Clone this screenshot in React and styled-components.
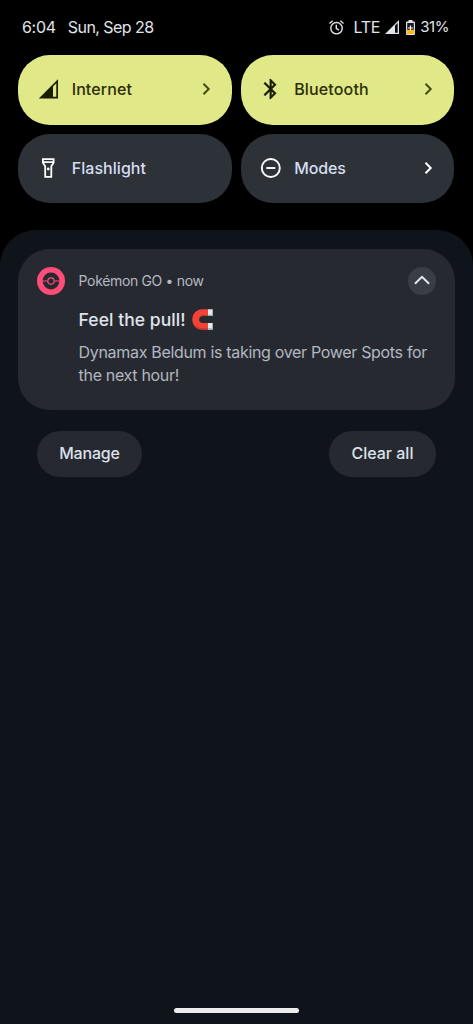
import styled, { createGlobalStyle } from "styled-components";

const GlobalStyle = createGlobalStyle`
    * {
        box-sizing: border-box;
    }

    body {
        margin: 0;
        background-color: #000;
        font-family: "Inter", "Roboto", sans-serif;
    }

    button {
        font: inherit;
        border: none;
        padding: 0;
        cursor: pointer;
    }

    svg {
        display: block;
        flex: none;
    }
`;

const Screen = styled.div`
    height: 1024px;
    display: flex;
    flex-direction: column;
    background-color: #000;
    overflow: hidden;
`;

const StatusBar = styled.header`
    height: 55px;
    flex: none;
    display: flex;
    align-items: center;
    justify-content: space-between;
    padding: 0 24px 1px 22px;
    color: #e1e4ea;
`;

const StatusGroup = styled.div`
    display: flex;
    align-items: center;
    gap: ${({ $gap }) => $gap};
`;

const StatusText = styled.span`
    margin: ${({ $margin }) => $margin || "0"};
    font-size: ${({ $size }) => $size || "16px"};
    line-height: 20px;
    letter-spacing: ${({ $spacing }) => $spacing || "0"};
    white-space: nowrap;
`;

const Tiles = styled.section`
    flex: none;
    display: grid;
    grid-template-columns: 213.5px 213.5px;
    grid-auto-rows: 69.5px;
    gap: 9px;
    padding: 0 18.2px;
`;

const Tile = styled.button`
    display: flex;
    align-items: center;
    padding: 0 16px 1px 18.5px;
    border-radius: 32px;
    background-color: ${({ $active }) => ($active ? "#e1e888" : "#2d3138")};
    color: ${({ $active }) => ($active ? "#1b1d00" : "#ffffff")};

    .chevron {
        margin-left: auto;
        color: ${({ $active }) => ($active ? "#474a10" : "#ffffff")};
    }
`;

const TileLabel = styled.span`
    margin-left: 11px;
    font-size: 16px;
    font-weight: 500;
    line-height: 24px;
    letter-spacing: ${({ $spacing }) => $spacing || "0"};
    color: ${({ $active }) => ($active ? "#2b2e06" : "#d5def0")};
`;

const Shade = styled.main`
    flex: 1;
    margin-top: 27px;
    padding: 18.5px 18.4px 0 18.2px;
    border-radius: 36px 36px 0 0;
    background-color: #0f141a;
    display: flex;
    flex-direction: column;
`;

const Notification = styled.article`
    height: 161.5px;
    flex: none;
    display: grid;
    grid-template-columns: 28px 1fr 28px;
    column-gap: 14px;
    padding: 18px 18.3px 0 18.4px;
    align-content: start;
    border-radius: 32px;
    background-color: #262a30;
`;

const AppLine = styled.div`
    align-self: center;
    font-size: 14px;
    line-height: 20px;
    letter-spacing: ${({ $spacing }) => $spacing || "0"};
    color: #b5b9c4;
    white-space: nowrap;
`;

const Collapse = styled.button`
    width: 28px;
    height: 28px;
    display: flex;
    align-items: center;
    justify-content: center;
    border-radius: 50%;
    background-color: #393d45;
    color: #e4e7ed;
`;

const Message = styled.div`
    grid-column: 2 / 4;
`;

const Title = styled.h2`
    margin: 12px 0 0;
    display: flex;
    align-items: center;
    gap: 6px;
    font-size: 17.5px;
    font-weight: 500;
    line-height: 26px;
    letter-spacing: ${({ $spacing }) => $spacing || "0"};
    color: #e0e3ec;
`;

const Body = styled.p`
    margin: 8px 0 0;
    font-size: 16px;
    line-height: 23px;
    letter-spacing: ${({ $spacing }) => $spacing || "0"};
    color: #b2b7c2;
    white-space: nowrap;
`;

const Actions = styled.div`
    flex: none;
    display: flex;
    justify-content: space-between;
    padding: 20.5px 18.7px 0 18.5px;
`;

const Action = styled.button`
    width: ${({ $width }) => $width};
    height: 46.5px;
    padding-bottom: 1px;
    border-radius: 24px;
    background-color: #262a30;
    color: #dce1eb;
    font-size: 16px;
    font-weight: 500;
    letter-spacing: ${({ $spacing }) => $spacing || "0"};
`;

const HomeBar = styled.div`
    width: 125px;
    height: 5px;
    margin: auto auto 11px;
    border-radius: 3px;
    background-color: #ebecee;
`;

const AlarmIcon = () => (
	<svg width="15" height="15" viewBox="0 0 15 15" fill="none" stroke="currentColor" strokeWidth="1.4">
		<circle cx="7.5" cy="8.2" r="5.7" />
		<path d="M7.3 4.8v3.6l2.6 1.7M.5 3.5 3.7.8M14.5 3.5 11.3.8" />
	</svg>
);

const StatusSignalIcon = () => (
	<svg width="14" height="14" viewBox="0 0 14 14">
		<path d="M0 14 14 0v14z" fill="currentColor" />
		<path d="M10 5.600 12.700 2.900v9.900H10z" fill="#0b0d0f" />
	</svg>
);

const BatteryIcon = () => (
	<svg width="9" height="15" viewBox="0 0 9 15">
		<path d="M2.500 0h4v1.400H8a1 1 0 0 1 1 1V14a1 1 0 0 1-1 1H1a1 1 0 0 1-1-1V2.400a1 1 0 0 1 1-1h1.500z" fill="currentColor" />
		<path d="M1.200 3h6.600v7H1.200z" fill="#16191d" />
		<path d="M.4 9.800h8.200V14H.4z" fill="#fbb91b" />
		<path d="M3.900 5.500h1.200v1.900H7v1.200H5.100v1.900H3.900V8.600H2V7.400h1.900z" fill="#fff" />
	</svg>
);

const SignalIcon = () => (
	<svg width="24" height="24" viewBox="0 0 24 24">
		<path d="M1.800 21.500 21 2.300v19.200z" fill="currentColor" />
		<path d="M16 9.500 19.300 6.200v13.600H16z" fill="#e1e888" />
	</svg>
);

const BluetoothIcon = () => (
	<svg width="24" height="24" viewBox="0.300 0 24 24" fill="currentColor">
		<path
			d="M17.7 7.700 12 2h-1v7.600L6.400 5 5 6.400l5.600 5.600L5 17.600 6.400 19l4.600-4.600V22h1l5.700-5.700-4.300-4.300 4.300-4.300zM13 5.800l1.900 1.900L13 9.600V5.800zm1.900 10.500L13 18.200v-3.800l1.900 1.900z"
			stroke="currentColor"
			strokeWidth="0.200"
		/>
	</svg>
);

const FlashlightIcon = () => (
	<svg width="24" height="24" viewBox="0 0 24 24" fill="none" stroke="currentColor" strokeWidth="1.800">
		<path d="M5.900 3.100h10.700v3.700l-2.300 3.500v10.500H8.200V10.300L5.900 6.800zM5.900 6.200h10.700" />
		<circle cx="11.250" cy="13" r="1.400" fill="currentColor" stroke="none" />
	</svg>
);

const ModesIcon = () => (
	<svg width="24" height="24" viewBox="0 0 24 24" fill="none" stroke="currentColor" strokeWidth="1.900">
		<circle cx="11.800" cy="12" r="9" />
		<path d="M7.300 12h9" />
	</svg>
);

const ChevronRight = () => (
	<svg className="chevron" width="20" height="20" viewBox="0 0 20 20" fill="none" stroke="currentColor" strokeWidth="2">
		<path d="m7.500 4.800 5.200 5.200-5.200 5.200" />
	</svg>
);

const ChevronUp = () => (
	<svg width="20" height="20" viewBox="0 0 20 20" fill="none" stroke="currentColor" strokeWidth="2">
		<path d="m2.900 12.800 7.100-7 7.100 7" />
	</svg>
);

const PokeballIcon = () => (
	<svg width="28" height="28" viewBox="0 0 28 28" fill="none">
		<circle cx="14" cy="14" r="14" fill="#ff4d78" />
		<circle cx="14" cy="14" r="8.400" fill="#262a30" />
		<path d="M5 14h5.500M17.500 14H23" stroke="#ff4d78" strokeWidth="1.200" />
		<circle cx="14" cy="14" r="3.200" stroke="#ff4d78" strokeWidth="1.200" />
	</svg>
);

const MagnetIcon = () => (
	<svg width="21" height="21" viewBox="0 0 21 21">
		<path d="M16 .3h-5.500C4.500.3.300 4.900.300 10.500s4.200 10.200 10.200 10.200H16v-6.600h-5.300c-2 0-3.600-1.400-3.600-3.600s1.600-3.400 3.600-3.400H16z" fill="#f44336" />
		<path d="M1 14c1.500 3.300 5 5.200 9.500 5.200H16v1.500h-5.500C5.500 20.700 2 18 1 14zM8 8.300c.8-.9 1.800-1.200 3-1.200h5V5.800h-5c-1.500 0-2.600 1.200-3 2.500z" fill="#c93632" />
		<path d="M16 .3h4.700v6.800H16zM16 14.100h4.700v6.600H16z" fill="#e4e8ea" />
		<path d="M16 5.800h4.700v1.300H16zM16 19.300h4.700v1.400H16z" fill="#8fb4c2" />
	</svg>
);

const tiles = [
	{ label: "Internet", Icon: SignalIcon, active: true, arrow: true, spacing: "0.1px" },
	{ label: "Bluetooth", Icon: BluetoothIcon, active: true, arrow: true, spacing: "0.15px" },
	{ label: "Flashlight", Icon: FlashlightIcon, spacing: "0.05px" },
	{ label: "Modes", Icon: ModesIcon, arrow: true, spacing: "-0.15px" },
];

const App = () => {
	return (
		<Screen>
			<GlobalStyle />
			<StatusBar>
				<StatusGroup $gap="12px">
					<StatusText $spacing="-0.3px">6:04</StatusText>
					<StatusText $spacing="-0.55px">Sun, Sep 28</StatusText>
				</StatusGroup>
				<StatusGroup $gap="7px">
					<AlarmIcon />
					<StatusText $margin="0 -2px 0 2px" $spacing="-0.2px">LTE</StatusText>
					<StatusSignalIcon />
					<BatteryIcon />
					<StatusText $margin="0 0 0 -2px" $size="15px" $spacing="-0.45px">31%</StatusText>
				</StatusGroup>
			</StatusBar>
			<Tiles>
				{tiles.map(({ label, Icon, active, arrow, spacing }) => (
					<Tile key={label} $active={active}>
						<Icon />
						<TileLabel $active={active} $spacing={spacing}>{label}</TileLabel>
						{arrow && <ChevronRight />}
					</Tile>
				))}
			</Tiles>
			<Shade>
				<Notification>
					<PokeballIcon />
					<AppLine $spacing="-0.34px">Pokémon GO • now</AppLine>
					<Collapse aria-label="Collapse">
						<ChevronUp />
					</Collapse>
					<Message>
						<Title $spacing="0.05px">
							Feel the pull! <MagnetIcon />
						</Title>
						<Body $spacing="-0.32px">
							Dynamax Beldum is taking over Power Spots for
							<br />
							the next hour!
						</Body>
					</Message>
				</Notification>
				<Actions>
					<Action $width="105.5px" $spacing="-0.2px">Manage</Action>
					<Action $width="107px">Clear all</Action>
				</Actions>
				<HomeBar />
			</Shade>
		</Screen>
	);
};

export default App;
